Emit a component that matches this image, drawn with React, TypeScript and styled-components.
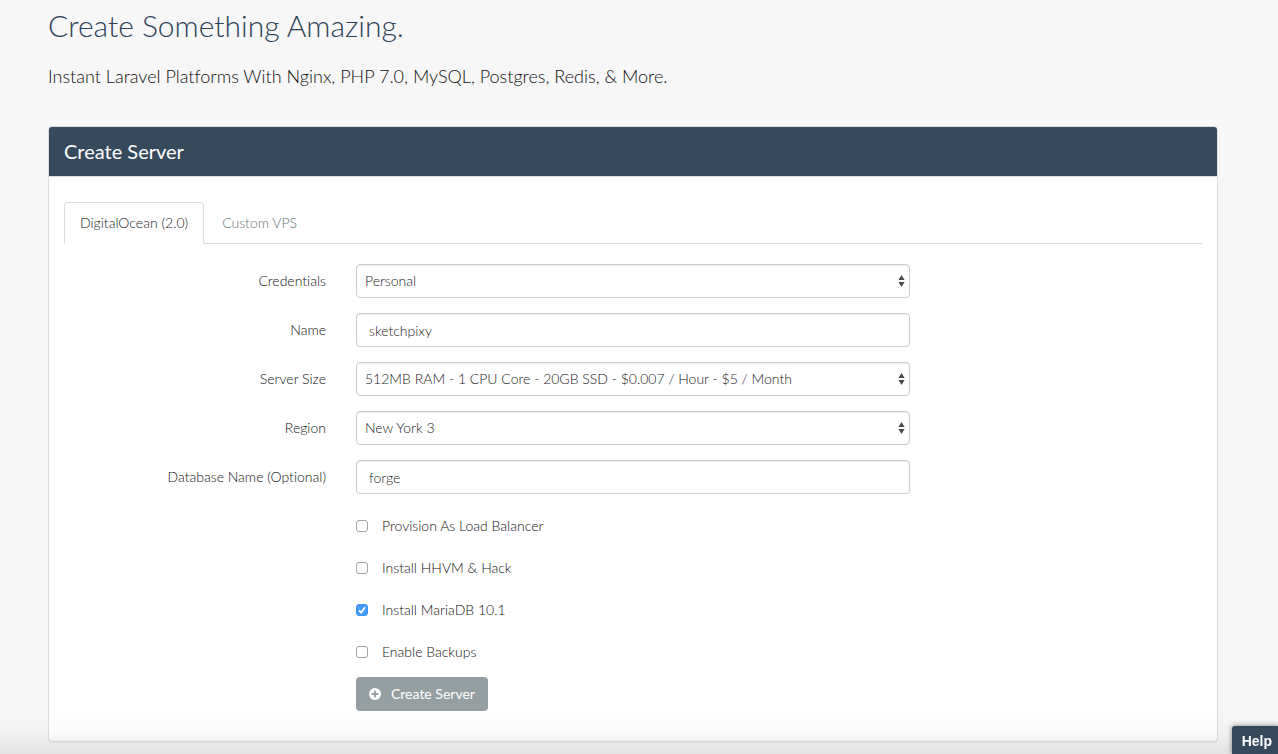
import React, { useState } from "react";
import styled, { createGlobalStyle } from "styled-components";

const GlobalStyle = createGlobalStyle`
  *, *::before, *::after { box-sizing: border-box; }
  body {
    margin: 0;
    background: #f7f7f7;
    color: #111;
    font-family: Lato, "Liberation Sans", sans-serif;
    font-size: 14px;
    font-weight: 300;
    font-variant-ligatures: none;
    line-height: 20px;
  }
`;

const Page = styled.main`
  padding: 8px 60px 12px 48px;
`;

const Title = styled.h1`
  margin: 0;
  color: #2b4056;
  font-size: 30px;
  font-weight: 300;
  line-height: 34px;
`;

const Lead = styled.p`
  margin: 22px 0 37px;
  font-size: 18px;
  line-height: 25px;
`;

const Panel = styled.section`
  border: 1px solid #ddd;
  border-radius: 4px;
  background: #fff;
  box-shadow: 0 1px 1px rgba(0, 0, 0, 0.05);
`;

const PanelHeading = styled.h2`
  margin: 0;
  padding: 12px 15px;
  border-bottom: 1px solid #ddd;
  border-radius: 3px 3px 0 0;
  background: #364a5e;
  color: #fff;
  font-size: 20px;
  font-weight: 400;
  line-height: 25px;
`;

const PanelBody = styled.div`
  padding: 25px 15px 30px;
`;

const Tabs = styled.div`
  display: flex;
  gap: 2px;
  margin-bottom: 20px;
  border-bottom: 1px solid #ddd;
`;

const Tab = styled.button<{ $active: boolean }>`
  margin-bottom: -1px;
  padding: 10px 15px;
  border: 1px solid ${(p) => (p.$active ? "#ddd" : "transparent")};
  border-bottom-color: ${(p) => (p.$active ? "#fff" : "transparent")};
  border-radius: 4px 4px 0 0;
  background: ${(p) => (p.$active ? "#fff" : "transparent")};
  color: ${(p) => (p.$active ? "#222" : "#687476")};
  font: inherit;
  font-variant-ligatures: none;
  cursor: pointer;
`;

const Form = styled.form`
  display: flex;
  flex-direction: column;
  gap: 15px;
  margin: 0 -15px;
`;

const Row = styled.div`
  display: grid;
  grid-template-columns: 3fr 6fr 3fr;
`;

const Label = styled.label`
  padding: 7px 15px;
  text-align: right;
`;

const Control = styled.div`
  position: relative;
  margin: 0 15px;
`;

const OffsetControl = styled(Control)`
  grid-column: 2;
`;

const TextInput = styled.input`
  display: block;
  width: 100%;
  height: 34px;
  padding: 7px 12px 6px;
  border: 1px solid #ccc;
  border-radius: 4px;
  background: #fff;
  box-shadow: inset 0 1px 1px rgba(0, 0, 0, 0.075);
  color: #222;
  font: inherit;
`;

const Select = styled.select`
  display: block;
  width: 100%;
  height: 34px;
  padding: 6px 24px 6px 8px;
  border: 1px solid #ccc;
  border-radius: 4px;
  appearance: none;
  background: #fff;
  box-shadow: inset 0 1px 1px rgba(0, 0, 0, 0.075);
  color: #222;
  font: inherit;
`;

const Arrows = styled.svg`
  position: absolute;
  top: 10px;
  right: 5px;
  pointer-events: none;
`;

const CheckLabel = styled.label`
  display: flex;
  align-items: center;
  gap: 14px;
  width: max-content;
  padding-top: 7px;
`;

const CheckWrap = styled.span`
  position: relative;
  display: flex;
`;

const Checkbox = styled.input`
  width: 12px;
  height: 12px;
  margin: 0;
  border: 1px solid #a3a3a3;
  border-radius: 3px;
  appearance: none;
  background: #fff;

  &:checked {
    border-color: #3e94f8;
    background: #459bfa;
  }
  & + svg {
    position: absolute;
    inset: 0;
    display: none;
    pointer-events: none;
  }
  &:checked + svg {
    display: block;
  }
`;

const SubmitButton = styled.button`
  display: flex;
  align-items: center;
  gap: 10px;
  height: 34px;
  padding: 0 13px;
  border: 0;
  border-radius: 4px;
  background: #959fa1;
  color: #fff;
  font: inherit;
  font-weight: 400;
  cursor: pointer;
`;

const BottomShade = styled.div`
  position: fixed;
  right: 0;
  bottom: 0;
  left: 0;
  height: 44px;
  background: linear-gradient(rgba(0, 0, 0, 0), rgba(0, 0, 0, 0.02) 50%, rgba(0, 0, 0, 0.08));
  pointer-events: none;
`;

const HelpButton = styled.button`
  position: fixed;
  right: 0;
  bottom: 0;
  height: 28px;
  padding: 2px 6px 0 10px;
  border: 0;
  border-radius: 3px 0 0 0;
  background: #364a5e;
  box-shadow: 0 0 5px rgba(0, 0, 0, 0.5);
  color: #fff;
  font: 700 14px/20px "Liberation Sans", Arial, sans-serif;
  cursor: pointer;
`;

type SelectFieldProps = { id: string; label: string; options: string[] };

const SelectField = ({ id, label, options }: SelectFieldProps) => (
  <Row>
    <Label htmlFor={id}>{label}</Label>
    <Control>
      <Select id={id}>
        {options.map((option) => (
          <option key={option}>{option}</option>
        ))}
      </Select>
      <Arrows width="7" height="14" viewBox="0 0 7 14" fill="#4a4a4a" aria-hidden="true">
        <path d="M3.5 1 6.6 6H.4zM3.5 13 .4 8h6.2z" />
      </Arrows>
    </Control>
  </Row>
);

const TextField = ({ id, label, value }: { id: string; label: string; value: string }) => (
  <Row>
    <Label htmlFor={id}>{label}</Label>
    <Control>
      <TextInput id={id} type="text" defaultValue={value} />
    </Control>
  </Row>
);

const CheckField = ({ label, checked = false }: { label: string; checked?: boolean }) => (
  <Row>
    <OffsetControl>
      <CheckLabel>
        <CheckWrap>
          <Checkbox type="checkbox" defaultChecked={checked} />
          <svg width="12" height="12" viewBox="0 0 12 12" fill="none" stroke="#fff" strokeWidth="1.7" aria-hidden="true">
            <path d="M3 6.3 5.2 8.6 9 3.2" />
          </svg>
        </CheckWrap>
        {label}
      </CheckLabel>
    </OffsetControl>
  </Row>
);

const tabs = ["DigitalOcean (2.0)", "Custom VPS"];

export default function App() {
  const [active, setActive] = useState(tabs[0]);

  return (
    <>
      <GlobalStyle />
      <Page>
        <Title>Create Something Amazing.</Title>
        <Lead>Instant Laravel Platforms With Nginx, PHP 7.0, MySQL, Postgres, Redis, &amp; More.</Lead>
        <Panel>
          <PanelHeading>Create Server</PanelHeading>
          <PanelBody>
            <Tabs role="tablist">
              {tabs.map((tab) => (
                <Tab
                  key={tab}
                  type="button"
                  role="tab"
                  aria-selected={tab === active}
                  $active={tab === active}
                  onClick={() => setActive(tab)}
                >
                  {tab}
                </Tab>
              ))}
            </Tabs>
            <Form onSubmit={(event) => event.preventDefault()}>
              <SelectField id="credentials" label="Credentials" options={["Personal"]} />
              <TextField id="name" label="Name" value="sketchpixy" />
              <SelectField
                id="size"
                label="Server Size"
                options={["512MB RAM - 1 CPU Core - 20GB SSD - $0.007 / Hour - $5 / Month"]}
              />
              <SelectField id="region" label="Region" options={["New York 3"]} />
              <TextField id="database" label="Database Name (Optional)" value="forge" />
              <CheckField label="Provision As Load Balancer" />
              <CheckField label="Install HHVM &amp; Hack" />
              <CheckField label="Install MariaDB 10.1" checked />
              <CheckField label="Enable Backups" />
              <Row>
                <OffsetControl>
                  <SubmitButton type="submit">
                    <svg width="12" height="12" viewBox="0 0 12 12" aria-hidden="true">
                      <circle cx="6" cy="6" r="6" fill="#fff" />
                      <path d="M6 2.6v6.8M2.6 6h6.8" stroke="#959fa1" strokeWidth="1.8" />
                    </svg>
                    Create Server
                  </SubmitButton>
                </OffsetControl>
              </Row>
            </Form>
          </PanelBody>
        </Panel>
      </Page>
      <BottomShade />
      <HelpButton type="button">Help</HelpButton>
    </>
  );
}
